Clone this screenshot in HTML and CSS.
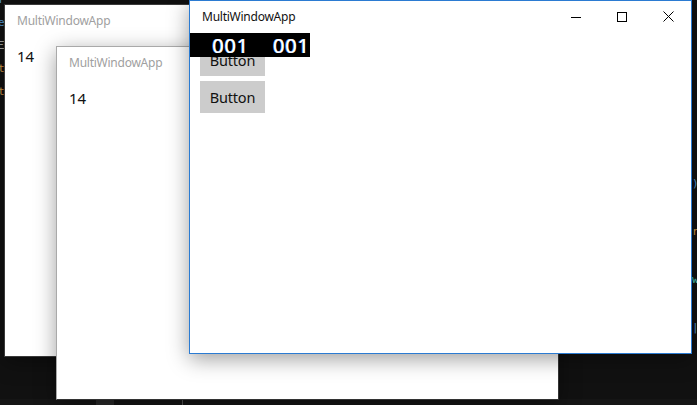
FILE: index.html
```html
<!DOCTYPE html>
<html lang="en">
<head>
	<meta charset="UTF-8">
	<title>MultiWindowApp</title>
	<link rel="stylesheet" href="styles.css">
</head>
<body>
	<div class="desktop">
		<!-- code editor bits peeking out behind the windows -->
		<div class="code code-left">
			<span class="c-blue">r</span>
			<span class="c-blue">e]</span>
			<span class="c-grey">Ξ</span>
			<span class="c-orange">to</span>
			<span class="c-orange">to</span>
		</div>
		<div class="code code-right">
			<span class="c-blue">)</span>
			<span class="c-orange">r</span>
			<span class="c-teal">w</span>
			<span class="c-blue">|</span>
		</div>
		<div class="taskbar">
			<span class="tb-tab"></span>
			<span class="tb-sep"></span>
		</div>

		<div class="window win-one">
			<div class="titlebar">
				<span class="title">MultiWindowApp</span>
			</div>
			<div class="content">
				<p class="count">14</p>
			</div>
		</div>

		<div class="window win-two">
			<div class="titlebar">
				<span class="title">MultiWindowApp</span>
			</div>
			<div class="content">
				<p class="count">14</p>
			</div>
		</div>

		<div class="window win-main active">
			<div class="titlebar">
				<span class="title">MultiWindowApp</span>
				<div class="caption">
					<span class="cap-btn"><i class="ico-min"></i></span>
					<span class="cap-btn"><i class="ico-max"></i></span>
					<span class="cap-btn">
						<svg width="11" height="11" viewBox="0 0 11 11"><path d="M0.5 0.5 L10.5 10.5 M10.5 0.5 L0.5 10.5" stroke="#000" stroke-width="1" fill="none"/></svg>
					</span>
				</div>
			</div>
			<div class="content buttons">
				<button type="button" class="btn">Button</button>
				<button type="button" class="btn">Button</button>
			</div>
			<div class="fps">
				<span>001</span>
				<span>001</span>
			</div>
		</div>
	</div>
</body>
</html>
```
FILE: styles.css
```css
* {
	margin: 0;
	padding: 0;
	box-sizing: border-box;
}

html, body {
	width: 697px;
	height: 405px;
	overflow: hidden;
	background: #111;
}

.desktop {
	position: relative;
	width: 697px;
	height: 405px;
	font-family: "Noto Sans", "Open Sans", sans-serif;
}

.code {
	position: absolute;
	display: flex;
	flex-direction: column;
	font-family: "DejaVu Sans Mono", monospace;
	font-size: 11px;
	line-height: 1;
}
.code-left {
	left: -2px;
	top: -6px;
	gap: 12px;
}
.code-right {
	left: 692px;
	top: 178px;
	gap: 37px;
}
.c-blue { color: #569cd6; }
.c-orange { color: #d69d4a; }
.c-teal { color: #4ec9b0; }
.c-grey { color: #aaa; }

.taskbar {
	position: absolute;
	left: 0;
	top: 399px;
	width: 697px;
	height: 6px;
	display: flex;
	background: #151515;
}
.tb-tab {
	margin-left: 96px;
	width: 18px;
	background: #2a2a2a;
}
.tb-sep {
	margin-left: 68px;
	width: 1px;
	background: #555;
}

.window {
	position: absolute;
	width: 503px;
	height: 354px;
	background: #fff;
	border: 1px solid #3a3a3a;
	box-shadow: 0 5px 20px rgba(0, 0, 0, 0.38);
	display: flex;
	flex-direction: column;
}

.win-one {
	left: 4px;
	top: 4px;
	height: 353px;
}
.win-two {
	left: 56px;
	top: 46px;
	border-color: #a9a9a9 #333 #333 #a9a9a9;
}
.win-main {
	left: 189px;
	top: 0;
	border-color: #2b7bd2;
}

.titlebar {
	height: 32px;
	display: flex;
	align-items: center;
	padding-left: 12px;
	flex-shrink: 0;
}
.title {
	font-size: 12px;
	color: #a0a0a0;
	letter-spacing: -0.25px;
	margin-top: -2px;
}
.active .title {
	color: #111;
}

.caption {
	margin-left: auto;
	display: flex;
	height: 32px;
}
.cap-btn {
	width: 46px;
	display: flex;
	align-items: center;
	justify-content: center;
	margin-top: -1px;
}
.ico-min {
	width: 10px;
	height: 1px;
	background: #000;
	margin-top: 2px;
}
.ico-max {
	width: 10px;
	height: 10px;
	border: 1px solid #000;
}

.content {
	padding: 9px 12px;
}
.count {
	font-size: 15px;
	color: #111;
	line-height: 20px;
}

.buttons {
	padding: 11px 10px;
	display: flex;
	flex-direction: column;
	align-items: flex-start;
	gap: 5px;
}
.btn {
	width: 65px;
	height: 32px;
	border: none;
	background: #ccc;
	font-family: "Noto Sans", "Open Sans", sans-serif;
	font-size: 14.5px;
	color: #111;
	letter-spacing: -0.2px;
}

.fps {
	position: absolute;
	left: 0;
	top: 32px;
	width: 120px;
	height: 24px;
	background: #000;
	display: flex;
	gap: 24px;
	padding-left: 22px;
	align-items: center;
	font-size: 20px;
	font-weight: 400;
	color: #fff;
	letter-spacing: 0.8px;
	text-shadow: -0.6px 0 0 #2f6fd8, 0.5px 0 0 #fff;
}
```
